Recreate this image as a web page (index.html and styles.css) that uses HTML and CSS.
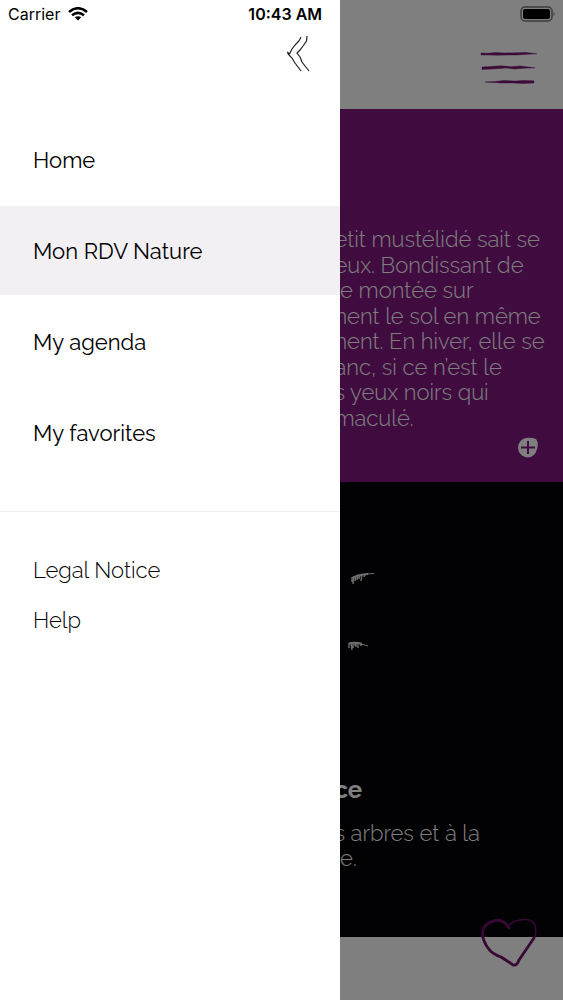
FILE: index.html
```html
<!DOCTYPE html>
<html lang="fr">
<head>
<meta charset="utf-8">
<meta name="viewport" content="width=device-width, initial-scale=1">
<title>Mon RDV Nature</title>
<link rel="stylesheet" href="styles.css">
</head>
<body>
<div class="page">
  <header class="topbar">
    <svg class="battery" width="36" height="16" viewBox="0 0 36 16" aria-hidden="true">
      <rect x="1" y="1" width="31" height="14" rx="4" fill="none" stroke="#777" stroke-width="1.5"/>
      <rect x="3" y="3" width="27" height="10" rx="2"/>
      <path d="M33.500 5.500Q35.500 8 33.500 10.500Z" fill="#777"/>
    </svg>
    <button class="icon-button" aria-label="Menu">
      <svg width="58" height="36" viewBox="0 0 58 36" fill="#801470" stroke="#601070" stroke-width=".4">
        <path d="M1 3L8 3.200 15 2.500 24 3 37 2.700 46 2.500 57 3.800 47 4.300 37 5 27 5 17 5.300 10 5 1 5Z"/>
        <path d="M2 17L11 16.500 21 15.800 31 16.700 40 16 55 17.800 44 18.200 35 19 26 18 16 18.800 2 19.500Z"/>
        <path d="M5 32L15 31.500 24 30.500 35 31 43 30.500 54 30.800V33L43 33.500 33 33 22 33Z"/>
      </svg>
    </button>
  </header>
  <main>
    <section class="story">
      <p class="copy lines">
        <span>etit mustélidé sait se</span>
        <span>eux. Bondissant de</span>
        <span>le montée sur</span>
        <span>nent le sol en même</span>
        <span>nent. En hiver, elle se</span>
        <span>anc, si ce n’est le</span>
        <span>s yeux noirs qui</span>
        <span>maculé.</span>
      </p>
      <button class="more" aria-label="Plus">
        <svg width="22" height="22" viewBox="0 0 22 22">
          <path d="M6 2Q12-.5 19 2 22 6 20 12 18 20 11 20.500 5 20 2 15-1 7 6 2Z" fill="#fff"/>
          <path d="M11 4V17M4 10.500H18" stroke="#801880" stroke-width="2"/>
        </svg>
      </button>
    </section>
    <section class="trace">
      <div class="marks">
        <svg width="27" height="13" viewBox="0 0 27 13" fill="none" stroke="#ddd">
          <path d="M4 5V10M6 4L5 12M8 4L7 9M10 3L9 8M12 3L11 7M14 2L13 9M17 2L16 5" stroke-width="1.400"/>
          <path d="M4 6Q9 3 15 2.500L20 2" stroke-width="2"/>
          <path d="M18 2L26 1.500"/>
        </svg>
        <svg width="21" height="11" viewBox="0 0 21 11" fill="none" stroke="#ddd">
          <path d="M1 2V7M3 1L4 9M5 1V7M7 2V5M8 2V6M10 2V7M13 3V5" stroke-width="1.400"/>
          <path d="M1 2.500Q8 1 14 3" stroke-width="2"/>
          <path d="M13 3L20 5"/>
        </svg>
      </div>
      <h2 class="copy">ce</h2>
      <p class="copy"><span>s arbres et à la</span><span>&nbsp;e.</span></p>
    </section>
  </main>
  <footer class="bottombar"></footer>
  <button class="favorite" aria-label="Favori">
    <svg width="58" height="50" viewBox="0 0 58 50" fill="none" stroke="#701068" stroke-linecap="round" stroke-linejoin="round">
      <path d="M28 10Q24 3 17 2 4 4 2 12 0 20 7 30 11 36 20 39 28 44 32 47 36 48 38 42L53 20" stroke-width="2.800"/>
      <path d="M28 7Q31 4 39 2 52 0 54 8 56 15 53 20" stroke-width="1.500"/>
    </svg>
  </button>
  <div class="scrim"></div>
</div>
<aside class="drawer">
  <div class="status">
    <span class="carrier">Carrier
      <svg width="20" height="14" viewBox="0 0 20 14" fill="none" stroke="#000" stroke-width="2.600" aria-hidden="true">
        <path d="M1 5Q10-2.500 19 5M4 8.300Q10 3.500 16 8.300"/>
        <path d="M6.800 10.300Q10 8 13.200 10.300L10 13.500Z" fill="#000" stroke="none"/>
      </svg>
    </span>
    <time>10:43 AM</time>
  </div>
  <button class="close" aria-label="Close menu">
    <svg width="24" height="36" viewBox="0 0 24 36" fill="none" stroke="#222" stroke-width="1.200">
      <path d="M14 1L12 5 9 8 5 13 3 17 1 18 5 22 8 27 11 31 14 35M0 16L3 18"/>
      <path d="M20 0L19.500 5 16 10 13 14 10 17 13 21 15 26 18 30 22 35"/>
    </svg>
  </button>
  <nav class="primary">
    <a href="#home">Home</a>
    <a href="#rdv" class="active" aria-current="page">Mon RDV Nature</a>
    <a href="#agenda">My agenda</a>
    <a href="#favorites">My favorites</a>
  </nav>
  <nav class="secondary">
    <a href="#legal">Legal Notice</a>
    <a href="#help">Help</a>
  </nav>
</aside>
</body>
</html>
```
FILE: styles.css
```css
* { box-sizing: border-box; }
body {
  margin: 0;
  position: relative;
  font-family: Raleway, Lato, sans-serif;
  font-size: 22px;
}
button { border: 0; padding: 0; background: none; display: block; cursor: pointer; }
svg { display: block; }
a { color: inherit; text-decoration: none; }

.page { position: relative; min-height: 100vh; display: flex; flex-direction: column; background: #fff; }
.topbar {
  display: flex;
  flex-direction: column;
  align-items: flex-end;
  gap: 28px;
  padding: 6px 7px 23px;
}
.icon-button { margin-right: 18px; }
.story {
  display: flex;
  flex-direction: column;
  gap: 6px;
  padding: 118px 16px 23px 59.4%;
  background: #801880;
  color: #fff;
}
.copy { margin: 0; font-weight: 300; line-height: 25px; white-space: nowrap; }
.copy span { display: block; }
.lines { display: grid; align-content: space-between; min-height: 204px; }
.more { align-self: flex-end; margin-right: 8px; }
.trace { padding: 90px 16px 66px 59.4%; background: #040206; color: #fff; }
.marks { display: grid; gap: 56px; padding-left: 14px; margin-bottom: 125px; }
h2.copy { font-size: 24px; font-weight: 700; margin-bottom: 19px; }
.bottombar { height: 63px; }
.favorite { position: absolute; right: 24px; bottom: 32px; }
.scrim { position: absolute; inset: 0; background: rgba(0, 0, 0, .5); }

.drawer { position: absolute; inset: 0 auto 0 0; width: 60.4%; background: #fff; color: #000; }
.status {
  display: flex;
  justify-content: space-between;
  align-items: center;
  height: 28px;
  padding: 0 18px 0 8px;
  font-family: Inter, sans-serif;
  font-size: 16px;
}
.carrier { display: flex; align-items: center; gap: 8px; }
.status time { font-weight: 600; }
.close { margin: 8px 29px 43px auto; }
.primary { display: grid; gap: 2px; padding-bottom: 34px; border-bottom: 1px solid #eee; }
.primary a { display: flex; align-items: center; height: 89px; padding: 0 33px; }
.primary .active { background: #f3f0f4; }
.secondary { display: grid; padding: 33px 33px 0; }
.secondary a { line-height: 50px; font-weight: 300; }
```
